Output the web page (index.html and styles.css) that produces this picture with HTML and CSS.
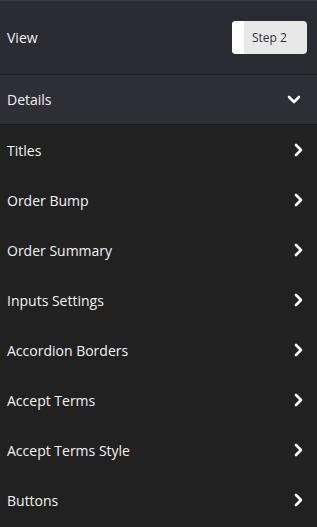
FILE: index.html
```html
<!DOCTYPE html>
<html lang="en">
<head>
  <meta charset="UTF-8" />
  <meta name="viewport" content="width=device-width, initial-scale=1.0"/>
  <title>Settings</title>
  <link rel="stylesheet" href="styles.css">
</head>
<body>
  <!-- View -->
  <div class="view-row">
    <span class="label">View</span>
    <div class="toggle">
      <span class="knob"></span>
      <span class="toggle-text">Step 2</span>
    </div>
  </div>

  <!-- Details header -->
  <div class="details-row">
    <span class="label">Details</span>
    <svg class="chev-down" width="14" height="9" viewBox="0 0 14 9"><path d="M2 2l5 5 5-5" fill="none" stroke="#fff" stroke-width="2.6" stroke-linecap="round" stroke-linejoin="round"/></svg>
  </div>

  <!-- Sections -->
  <div class="list">
    <div class="item"><span class="label">Titles</span><svg class="chev" width="9" height="14" viewBox="0 0 9 14"><path d="M2 2l5 5-5 5" fill="none" stroke="#fff" stroke-width="2.6" stroke-linecap="round" stroke-linejoin="round"/></svg></div>
    <div class="item"><span class="label">Order Bump</span><svg class="chev" width="9" height="14" viewBox="0 0 9 14"><path d="M2 2l5 5-5 5" fill="none" stroke="#fff" stroke-width="2.6" stroke-linecap="round" stroke-linejoin="round"/></svg></div>
    <div class="item"><span class="label">Order Summary</span><svg class="chev" width="9" height="14" viewBox="0 0 9 14"><path d="M2 2l5 5-5 5" fill="none" stroke="#fff" stroke-width="2.6" stroke-linecap="round" stroke-linejoin="round"/></svg></div>
    <div class="item"><span class="label">Inputs Settings</span><svg class="chev" width="9" height="14" viewBox="0 0 9 14"><path d="M2 2l5 5-5 5" fill="none" stroke="#fff" stroke-width="2.6" stroke-linecap="round" stroke-linejoin="round"/></svg></div>
    <div class="item"><span class="label">Accordion Borders</span><svg class="chev" width="9" height="14" viewBox="0 0 9 14"><path d="M2 2l5 5-5 5" fill="none" stroke="#fff" stroke-width="2.6" stroke-linecap="round" stroke-linejoin="round"/></svg></div>
    <div class="item"><span class="label">Accept Terms</span><svg class="chev" width="9" height="14" viewBox="0 0 9 14"><path d="M2 2l5 5-5 5" fill="none" stroke="#fff" stroke-width="2.6" stroke-linecap="round" stroke-linejoin="round"/></svg></div>
    <div class="item"><span class="label">Accept Terms Style</span><svg class="chev" width="9" height="14" viewBox="0 0 9 14"><path d="M2 2l5 5-5 5" fill="none" stroke="#fff" stroke-width="2.6" stroke-linecap="round" stroke-linejoin="round"/></svg></div>
    <div class="item"><span class="label">Buttons</span><svg class="chev" width="9" height="14" viewBox="0 0 9 14"><path d="M2 2l5 5-5 5" fill="none" stroke="#fff" stroke-width="2.6" stroke-linecap="round" stroke-linejoin="round"/></svg></div>
  </div>
</body>
</html>
```

FILE: styles.css
```css
* { box-sizing: border-box; }

body {
  margin: 0;
  font-family: 'Open Sans', sans-serif;
  background: #212121;
  color: #f2f2f2;
}

.label {
  font-size: 14px;
}

.view-row {
  height: 75px;
  background: #2b2b33;
  border-top: 1px solid #3a3a42;
  border-bottom: 1px solid #1e1e24;
  display: flex;
  justify-content: space-between;
  align-items: center;
  padding: 0 10px 0 7px;
}

.toggle {
  width: 75px;
  height: 33px;
  background: #e8e8e8;
  border-radius: 4px;
  display: flex;
  align-items: center;
  overflow: hidden;
}

.knob {
  width: 12px;
  height: 100%;
  background: #fff;
}

.toggle-text {
  color: #333;
  font-size: 12px;
  margin-left: 8px;
}

.details-row {
  height: 50px;
  background: #2e2e37;
  border-bottom: 1px solid #1b1b1b;
  display: flex;
  justify-content: space-between;
  align-items: center;
  padding: 0 16px 0 7px;
}

.item {
  height: 50px;
  display: flex;
  justify-content: space-between;
  align-items: center;
  padding: 0 14px 0 7px;
}
```
